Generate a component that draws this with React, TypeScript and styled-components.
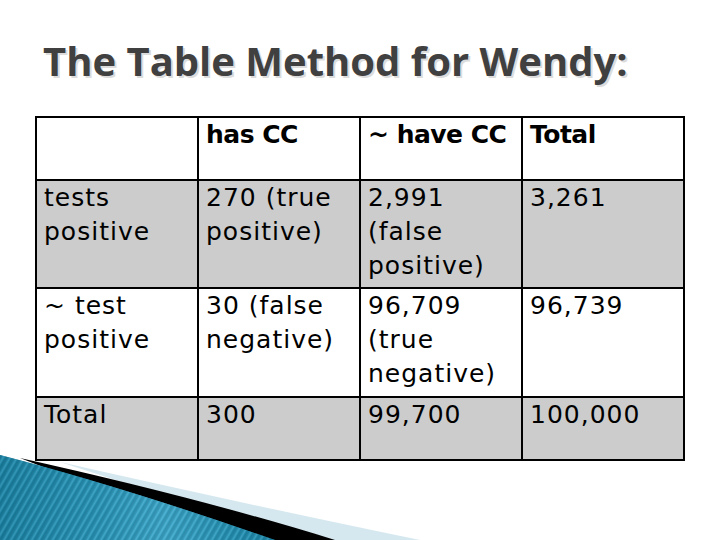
import React from "react";
import styled, { createGlobalStyle } from "styled-components";

const Global = createGlobalStyle`
  html, body { margin: 0; padding: 0; background: #ffffff; }
  #root { width: 720px; height: 540px; }
`;

const Slide = styled.div`
  position: relative;
  width: 720px;
  height: 540px;
  overflow: hidden;
  background: #ffffff;
  display: flex;
  flex-direction: column;
`;

const Title = styled.h1`
  margin: 0;
  padding: 40px 0 0 43px;
  height: 80px;
  box-sizing: border-box;
  font-family: "Open Sans", "DejaVu Sans", sans-serif;
  font-weight: 700;
  font-size: 40px;
  line-height: 42px;
  color: #404040;
  text-shadow: 2px 2px 0 #dcdcdc;
  white-space: nowrap;
`;

const Table = styled.table`
  margin: 36px 0 0 35px;
  border-collapse: collapse;
  table-layout: fixed;
  width: 649px;
  font-family: "DejaVu Sans", Verdana, sans-serif;
  font-size: 25px;
  line-height: 34px;
  color: #000;
  position: relative;
  z-index: 1;
`;

const Col = styled.col`
  width: 162px;
`;

const Row = styled.tr<{ $shade?: boolean; $h: number }>`
  background: ${(p) => (p.$shade ? "#cccccc" : "#ffffff")};
  height: ${(p) => p.$h}px;
`;

const Cell = styled.td<{ $head?: boolean }>`
  border: 2px solid #000;
  padding: 0 4px 0 7px;
  vertical-align: top;
  font-weight: ${(p) => (p.$head ? 700 : 400)};
  letter-spacing: ${(p) => (p.$head ? "-0.5px" : "1px")};
  overflow: hidden;
`;

const Swoosh = styled.svg`
  position: absolute;
  left: 0;
  bottom: 0;
  width: 720px;
  height: 90px;
  z-index: 0;
`;

const rows: { shade: boolean; h: number; cells: string[][]; head?: boolean }[] = [
  { shade: false, h: 63, head: true, cells: [[""], ["has CC"], ["~ have CC"], ["Total"]] },
  {
    shade: true,
    h: 108,
    cells: [["tests", "positive"], ["270 (true", "positive)"], ["2,991", "(false", "positive)"], ["3,261"]],
  },
  {
    shade: false,
    h: 109,
    cells: [["~ test", "positive"], ["30 (false", "negative)"], ["96,709", "(true", "negative)"], ["96,739"]],
  },
  { shade: true, h: 63, cells: [["Total"], ["300"], ["99,700"], ["100,000"]] },
];

export default function App() {
  return (
    <Slide>
      <Global />
      <Title>The Table Method for Wendy:</Title>
      <Table>
        <colgroup>
          <Col />
          <Col />
          <Col />
          <Col />
        </colgroup>
        <tbody>
          {rows.map((r, i) => (
            <Row key={i} $shade={r.shade} $h={r.h}>
              {r.cells.map((c, j) => (
                <Cell key={j} $head={r.head}>
                  {c.map((line, k) => (
                    <React.Fragment key={k}>
                      {k > 0 && <br />}
                      {line}
                    </React.Fragment>
                  ))}
                </Cell>
              ))}
            </Row>
          ))}
        </tbody>
      </Table>
      <Swoosh viewBox="0 450 720 90" preserveAspectRatio="none">
        <defs>
          <linearGradient id="blueG" x1="0" y1="0" x2="1" y2="0">
            <stop offset="0" stopColor="#0b6784" />
            <stop offset="0.35" stopColor="#2a8fb0" />
            <stop offset="0.6" stopColor="#54b6d6" />
            <stop offset="0.85" stopColor="#1f86a6" />
            <stop offset="1" stopColor="#0e6f8e" />
          </linearGradient>
          <pattern id="lines" width="6" height="6" patternUnits="userSpaceOnUse" patternTransform="rotate(30)">
            <rect width="6" height="6" fill="url(#blueG)" />
            <line x1="0" y1="0" x2="0" y2="6" stroke="#ffffff" strokeOpacity="0.08" strokeWidth="2" />
          </pattern>
        </defs>
        <path d="M 60 462 Q 250 505 420 540 L 300 540 Z" fill="#d6e8ef" />
        <path d="M 20 458 Q 200 498 335 540 L 230 540 Z" fill="#000000" />
        <path d="M 0 455 Q 120 486 275 540 L 0 540 Z" fill="url(#blueG)" />
        <path d="M 0 455 Q 120 486 275 540 L 0 540 Z" fill="url(#lines)" opacity="0.6" />
      </Swoosh>
    </Slide>
  );
}
